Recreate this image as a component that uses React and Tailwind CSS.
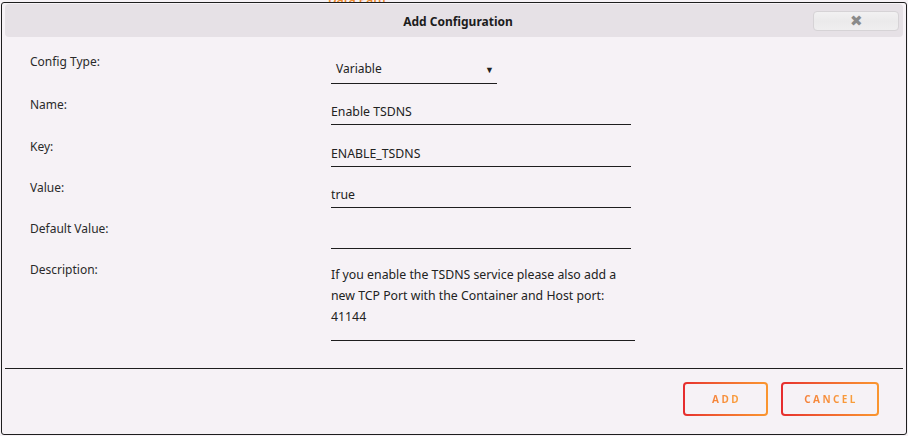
import { useState } from 'react'

const fields = [
  { label: 'Name:', value: 'Enable TSDNS', height: 'h-[42px]' },
  { label: 'Key:', value: 'ENABLE_TSDNS', height: 'h-[41px]' },
  { label: 'Value:', value: 'true', height: 'h-[41px]' },
  { label: 'Default Value:', value: '', height: 'h-[41px]' },
]

const GradientButton = ({ children, width }) => (
  <button className={`${width} h-[34px] rounded-[4px] bg-gradient-to-r from-[#e62b2e] to-[#fa962f] p-[2px]`}>
    <span className="flex h-full w-full items-center justify-center rounded-[2px] bg-[#f6f2f6]">
      <span className="bg-gradient-to-r from-[#f5803a] to-[#f9a03a] bg-clip-text pl-[2px] text-[10px] font-bold tracking-[2.4px] text-transparent">
        {children}
      </span>
    </span>
  </button>
)

const App = () => {
  const [configType] = useState('Variable')

  return (
    <div className="h-[436px] w-[908px] overflow-hidden bg-[#f6f2f6] font-['Noto_Sans',sans-serif] text-[12px] text-[#222]">
      {/* page text peeking above the dialog */}
      <div className="h-[2px] overflow-hidden bg-[#f6f2f6]">
        <div className="-mt-[9px] pl-[328px] text-[12px] font-semibold text-[#f08a2c]">Data Path</div>
      </div>

      <div className="mx-[1px] flex h-[433px] flex-col rounded-[3px] border border-[#1e1e1e] bg-[#f6f2f6] px-[3px] pt-[1px]">
        {/* Title bar */}
        <div className="flex h-[33px] items-center rounded-[4px] bg-[#e6e1e6]">
          <div className="flex-1 pl-[98px] pt-[2px] text-center text-[12px] font-bold text-[#1c1c1c]">Add Configuration</div>
          <button className="mr-[4px] flex h-[20px] w-[86px] items-center justify-center rounded-[4px] border border-[#d6d3d6] bg-gradient-to-b from-[#f2f1f2] via-[#ebeaeb] to-[#efeeef] text-[15px] leading-none text-[#8a8a8a]">
            ✖
          </button>
        </div>

        {/* Form */}
        <div className="flex flex-col pt-[17px] pl-[25px]">
          <div className="flex h-[43px] items-start">
            <div className="w-[301px] leading-[16px] text-[#2a2a2a]">Config Type:</div>
            <div className="mt-[7px] flex w-[166px] items-center justify-between border-b border-[#1e1e1e] pb-[6px] pl-[5px] pr-[3px] leading-[16px]">
              <span>{configType}</span>
              <span className="text-[9px] leading-none">▼</span>
            </div>
          </div>

          {fields.map((field, index) => (
            <div key={index} className={`flex items-start ${field.height}`}>
              <div className="w-[301px] leading-[16px] text-[#2a2a2a]">{field.label}</div>
              <div className="mt-[7px] h-[21px] w-[300px] border-b border-[#1e1e1e] text-[12.3px] leading-[16px]">
                {field.value}
              </div>
            </div>
          ))}

          <div className="flex items-start">
            <div className="w-[301px] leading-[16px] text-[#2a2a2a]">Description:</div>
            <div className="mt-[2px] w-[304px] border-b border-[#1e1e1e] pb-[13px] text-[12.3px] leading-[21px]">
              If you enable the TSDNS service please also add a new TCP Port with the Container and Host port: 41144
            </div>
          </div>
        </div>

        {/* Footer */}
        <div className="mt-[27px] border-t border-[#1e1e1e]" />
        <div className="flex justify-end gap-[13px] pt-[13px] pr-[24px]">
          <GradientButton width="w-[85px]">ADD</GradientButton>
          <GradientButton width="w-[98px]">CANCEL</GradientButton>
        </div>
      </div>
    </div>
  )
}

export default App
